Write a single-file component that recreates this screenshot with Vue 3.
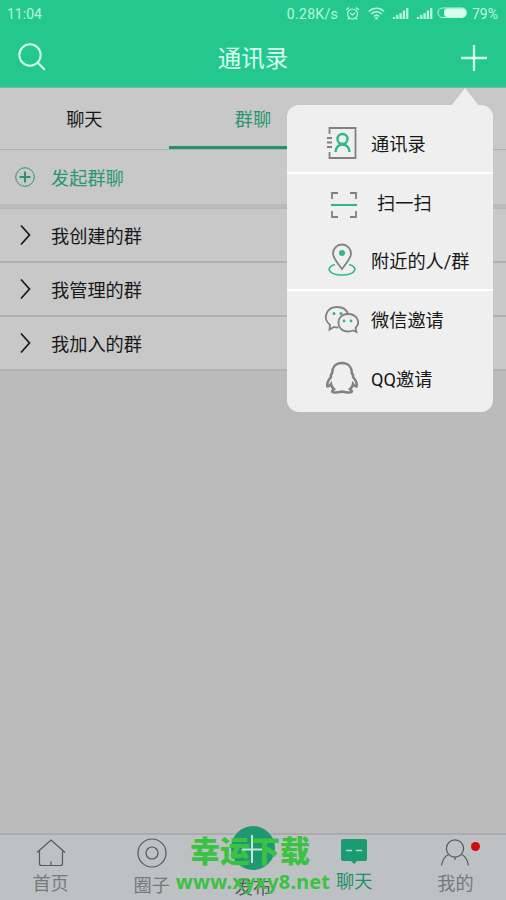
<script setup>
const groups = ['我创建的群', '我管理的群', '我加入的群']
const bars = [2, 4, 6, 8.5, 11]
</script>

<template>
  <div class="screen">
    <header class="header">
      <div class="status">
        <span class="time">11:04</span>
        <span class="speed">0.28K/s</span>
        <svg class="alarm" width="15" height="15" viewBox="0 0 15 15"><circle cx="7.5" cy="8" r="5" /><path d="M1.2 4 4 1.5M13.8 4 11 1.5M5 7l2.5 2 2.5-2.3M4 12.2l-1.3 1.5M11 12.2l1.3 1.500" /></svg>
        <svg class="wifi" width="17" height="13" viewBox="0 0 17 13"><path d="M.8 4.500C5.200 .2 11.800 .2 16.200 4.500M3.300 7C6.300 4 10.700 4 13.700 7M5.800 9.500c1.600-1.500 3.800-1.500 5.400 0" /><circle cx="8.500" cy="11.300" r="1.300" /></svg>
        <svg v-for="n in 2" :key="n" class="signal" width="17" height="12" viewBox="0 0 17 12"><path v-for="(h, i) in bars" :key="i" :d="`M${2 + i * 3.3} 12v-${h}`" /></svg>
        <svg class="battery" width="31" height="12" viewBox="0 0 31 12"><rect x="1" y="1" width="28.500" height="9.500" rx="4.500" class="shell" /><rect x="7" y="1.500" width="22" height="8.500" rx="3.500" class="fill" /></svg>
        <span class="percent">79%</span>
      </div>
      <div class="titlebar">
        <svg class="search" width="30" height="30" viewBox="0 0 30 30"><circle cx="12" cy="12" r="10.700" /><path d="m19.500 19.500 7.300 7.300" /></svg>
        <h1>通讯录</h1>
        <svg class="plus" width="26" height="26" viewBox="0 0 26 26"><path d="M13 0v26M0 13h26" /></svg>
      </div>
    </header>

    <nav class="tabs">
      <span class="tab">聊天</span>
      <span class="tab active">群聊</span>
      <span class="tab"></span>
    </nav>

    <div class="create">
      <svg width="20" height="20" viewBox="0 0 20 20"><circle cx="10" cy="10" r="9.300" /><path d="M10 4.500v11M4.500 10h11" /></svg>
      <span>发起群聊</span>
    </div>

    <ul class="groups">
      <li v-for="g in groups" :key="g">
        <svg width="12" height="22" viewBox="0 0 12 22"><path d="m1 1.500 8.500 9.500L1 20.500" /></svg>
        <span>{{ g }}</span>
      </li>
    </ul>

    <footer class="bottom">
      <div class="item home">
        <svg width="30" height="28" viewBox="0 0 30 28"><path d="M1 13.500 15 1l14 12.500M3.500 12v12.500q0 2 2 2h19q2 0 2-2V12M15 22.500v4" /></svg>
        <span>首页</span>
      </div>
      <div class="item circle">
        <svg width="30" height="30" viewBox="0 0 30 30"><circle cx="15" cy="15" r="14" /><circle cx="15" cy="15" r="6" /></svg>
        <span>圈子</span>
      </div>
      <div class="item publish">
        <svg width="44" height="44" viewBox="0 0 44 44"><circle cx="22" cy="22" r="22" /></svg>
        <span>发布</span>
      </div>
      <div class="item chat">
        <svg width="26" height="26" viewBox="0 0 26 26"><path class="bubble" d="M2 0h22q2 0 2 2v18q0 2-2 2h-8l-3 3-3-3H2q-2 0-2-2V2q0-2 2-2Z" /><path class="eyes" d="M5 11.500h6M15 11.500h6" /></svg>
        <span>聊天</span>
      </div>
      <div class="item mine">
        <svg width="30" height="28" viewBox="0 0 30 28"><circle cx="15" cy="9.500" r="8.600" /><path d="M8.500 15.500Q3 18 1.500 26.500M21.500 15.500Q27 18 28.500 26.500M15 18v3" /></svg>
        <span>我的</span>
        <i class="dot"></i>
      </div>
    </footer>

    <div class="watermark">
      <strong>幸运下载</strong>
      <b>www.xyxy8.net</b>
      <svg width="30" height="32" viewBox="0 0 30 32"><path d="M15 1v28M5 15.500h20" /></svg>
    </div>

    <div class="menu">
      <div class="entry ruled first">
        <svg width="32" height="34" viewBox="0 0 32 34"><path class="g" d="M3.500 8V2h26v30h-26v-6M1 12h5M1 16.500h5M1 21h5" /><g class="a thick"><circle cx="16.500" cy="13" r="5" /><path d="M9.500 26c0-10 14-10 14 0" /></g></svg>
        <span>通讯录</span>
      </div>
      <div class="entry scan">
        <svg width="28" height="28" viewBox="0 0 28 28"><path class="g" d="M2 8V2h6M20 2h6v6M2 20v6h6M20 26h6v-6" /><path class="a" d="M1 14h26" /></svg>
        <span>扫一扫</span>
      </div>
      <div class="entry ruled">
        <svg width="32" height="34" viewBox="0 0 32 34"><path class="a thin" d="M9 21.500C-1 24 2 32 16 32s17-8 7-10.500" /><path class="g" d="M16 26C12 21 7 15 7 10.500a9 9 0 0 1 18 0C25 15 20 21 16 26Z" /><circle class="solid" cx="16" cy="10" r="3" /></svg>
        <span>附近的人/群</span>
      </div>
      <div class="entry wechat">
        <svg width="34" height="30" viewBox="0 0 34 30"><path class="g" d="M13.500 22.500q-2.500 0-4.500-.5L4.500 24.500l.5-4.500C-3 13.500 1.500 2 12 2c6 0 10 3 11 7.500" /><path class="g" d="M23 9c-13 0-12.500 17.500 0 17.500 2 0 3.500-.2 5-1l3.500 1.500-1-4C36 18 32.500 9 23 9Z" /><g class="solid"><circle cx="9" cy="8.500" r="1.500" /><circle cx="16" cy="8.500" r="1.500" /><circle cx="19" cy="16" r="1.400" /><circle cx="26" cy="16" r="1.400" /></g></svg>
        <span>微信邀请</span>
      </div>
      <div class="entry">
        <svg width="34" height="34" viewBox="0 0 34 34"><path class="g qq" d="M17 2C10 2 7 7 7 12.500c-1 1-1.500 2-1 3.500-3 3.500-4.500 6.500-3.500 9.500 1.500 0 2.500-1 3.500-2.500.5 2.500 1.500 4 3 5.200-5 3.300.5 4.300 8 2.300 7.500 2 13 1 8-2.300 1.500-1.200 2.500-2.700 3-5.200 1 1.500 2 2.500 3.500 2.500 1-3-.5-6-3.500-9.500.5-1.500 0-2.500-1-3.500C27 7 24 2 17 2Z" /></svg>
        <span>QQ邀请</span>
      </div>
    </div>
  </div>
</template>

<style>
body { margin: 0; background: #bcbcbc; }
</style>

<style scoped>
* { box-sizing: border-box; }
.screen { position: relative; display: flex; flex-direction: column; width: 506px; height: 900px; overflow: hidden; background: #bbb; color: #171717; font-family: Roboto, "Noto Sans CJK SC", sans-serif; font-size: 18.200px; line-height: 26px; }
svg { display: block; flex: none; fill: none; stroke: currentColor; }
.header { height: 88px; flex: none; background: #24c88f; color: #d5ffee; border-bottom: 1px solid #78b9a0; }
.status { display: flex; align-items: center; height: 27px; padding: 1px 8px 0 7px; font: 14px/27px Roboto, sans-serif; color: #b9f8dc; }
.status svg { margin-top: -2px; }
.speed { margin-left: auto; margin-right: 7px; font-size: 14px; letter-spacing: .3px; }
.alarm { margin-right: 8px; stroke-width: 1.200; }
.wifi { margin-right: 7px; stroke-width: 1.400; }
.wifi circle { fill: currentColor; stroke: none; }
.signal { margin-right: 7px; stroke-width: 2.300; }
.signal + .battery { margin-left: -3px; }
.battery { margin-right: 4px; }
.fill { fill: #d5ffee; stroke: none; }
.titlebar { display: flex; justify-content: space-between; align-items: center; height: 60px; padding: 1px 19px 0 18px; }
.search { stroke-width: 2; }
.plus { stroke-width: 2.300; }
h1 { margin: 3px 3px 0 0; font-size: 23.500px; line-height: 32px; font-weight: 400; }
.tabs { display: flex; height: 62px; flex: none; background: #c8c8c8; border-bottom: 1px solid #afafaf; }
.tab { flex: 1; height: 61px; text-align: center; line-height: 63px; }
.active { color: #299673; border-bottom: 3px solid #24916c; }
.create { display: flex; align-items: center; gap: 16px; height: 54px; flex: none; padding: 0 15px; background: #c8c8c8; color: #299673; }
.create path { stroke-width: 2; }
.create span, .groups span { padding-top: 4px; }
.entry span { padding-top: 3px; }
.groups { margin: 0; padding: 5px 0 0; list-style: none; }
.groups li { display: flex; align-items: center; gap: 19px; height: 54px; padding: 0 20px; background: #c8c8c8; border-bottom: 2px solid #b0b0b0; }
.groups li:first-child { box-shadow: 0 -1px #b6b6b6; }
.groups svg { stroke-width: 1.700; }
.bottom { display: flex; height: 67px; margin-top: auto; border-top: 2px solid #a9abad; background: #bdc1c3; color: #75797b; }
.item { position: relative; flex: 1; display: flex; flex-direction: column; align-items: center; padding-top: 4px; }
.item svg { stroke-width: 1.200; color: #55595b; }
.item span { line-height: 26px; }
.home span { margin-top: 4px; }
.circle { padding-top: 3px; }
.circle span { margin-top: 5px; }
.publish svg { margin-top: -13px; fill: #209773; stroke: none; }
.publish span { margin-top: 5px; color: #53585a; }
.chat span { margin-top: 4px; color: #1f8d6a; }
.item .bubble { fill: #1b9b70; stroke: none; }
.item .eyes { stroke: #b5dcca; stroke-width: 1.500; }
.mine span { margin-top: 4px; }
.dot { position: absolute; left: 66px; top: 7px; width: 9px; height: 9px; border-radius: 50%; background: #d00b0b; }
.watermark { position: absolute; left: 176px; top: 833px; width: 156px; height: 66px; color: #3bc143; text-align: center; white-space: nowrap; }
.watermark strong { display: block; margin-left: -8px; padding-top: 1px; font-size: 30px; line-height: 36px; font-weight: 900; }
.watermark b { display: block; margin-left: -2px; font: 700 19.800px/23px "Noto Sans", sans-serif; letter-spacing: .25px; }
.watermark svg { position: absolute; left: 61px; top: 1px; color: #c0eacc; stroke-width: 2; }
.menu { position: absolute; left: 287px; top: 105px; width: 206px; height: 307px; padding-top: 10px; border-radius: 12px; background: #efefef; }
.menu::before { content: ""; position: absolute; left: 164px; top: -17px; border: solid transparent; border-width: 0 14px 18px; border-bottom-color: #efefef; }
.entry { display: flex; align-items: center; height: 58.500px; padding-left: 38px; gap: 13px; }
.entry svg { margin-left: 1px; }
.entry svg[width="34"] { margin: 0 -1px 0 0; }
.ruled { border-bottom: 2px solid #fff; }
.scan { padding-left: 42px; gap: 19px; }
.scan svg { margin-top: 4px; }
.g { stroke: #818181; stroke-width: 1.800; }
.a { stroke: #32b68c; stroke-width: 2; }
.thick { stroke-width: 2.400; }
.thin { stroke-width: 1.600; }
.solid { fill: #32b68c; stroke: none; }
.qq { stroke-width: 2.500; }
</style>
